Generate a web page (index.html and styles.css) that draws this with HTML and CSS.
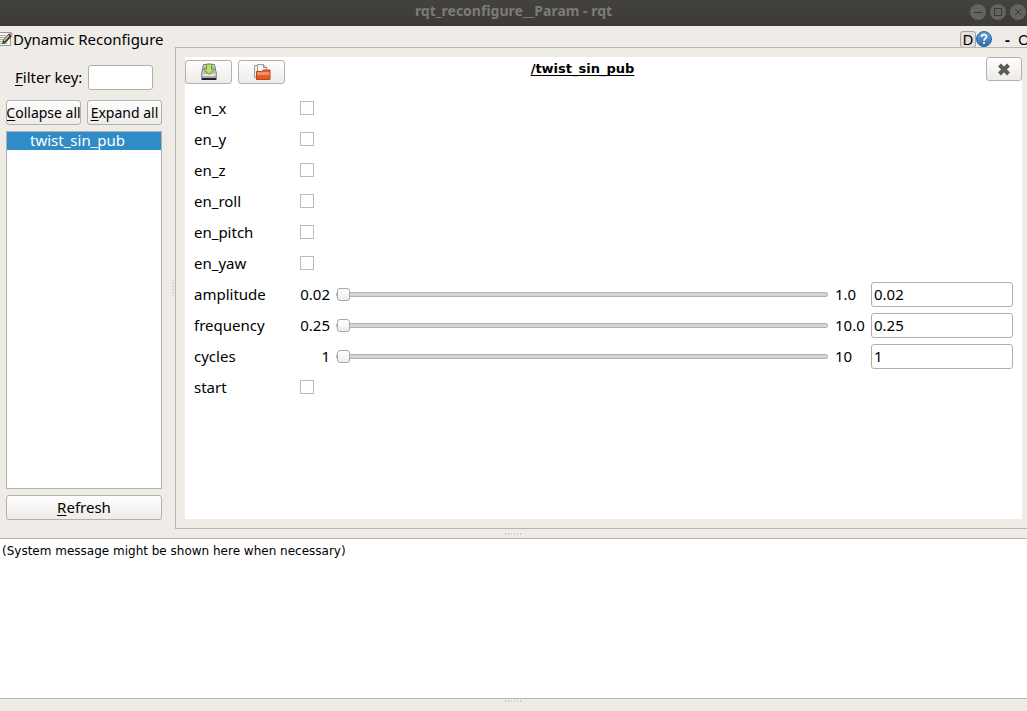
FILE: index.html
```html
<!DOCTYPE html>
<html lang="en">
<head>
<meta charset="utf-8">
<title>rqt_reconfigure__Param - rqt</title>
<link rel="stylesheet" href="styles.css">
</head>
<body>
<header class="titlebar">
  <h1 class="window-title">rqt_reconfigure__Param - rqt</h1>
  <div class="window-controls">
    <button class="window-button" aria-label="Minimize"><svg viewBox="0 0 16 16"><path d="M4 8.500h8"/></svg></button>
    <button class="window-button" aria-label="Maximize"><svg viewBox="0 0 16 16"><path d="M4.500 4.500h7v7h-7z"/></svg></button>
    <button class="window-button" aria-label="Close"><svg viewBox="0 0 16 16"><path d="M5 5l6 6M11 5l-6 6"/></svg></button>
  </div>
</header>
<div class="dock-header">
  <svg class="edit-icon" viewBox="0 0 13 16">
    <path d="M-3 1.500h13.500v13H-3z" fill="#f4f4f2" stroke="#999"/>
    <path d="M-1 4.500h7M-1 6.500h6M-1 8.500h4M-1 10.500h3M-1 12.500h8" stroke="#aaa"/>
    <path d="M2 13l1-4 6-6.500 3 2.500-6.500 7z" fill="#333"/>
    <path d="M4 10l5-5.500" stroke="#d9cf72" stroke-width="1.500"/>
    <path d="M9 2.500l2-1.500 2 2-1.500 2z" fill="#d48bb4"/>
  </svg>
  <h2 class="dock-title">Dynamic Reconfigure</h2>
  <div class="dock-tools">
    <button class="d-button">D</button>
    <button class="help-button" aria-label="Help"><svg viewBox="0 0 16 16">
      <defs><linearGradient id="help" x2="0" y2="1"><stop stop-color="#69a5d5"/><stop offset="1" stop-color="#286ca8"/></linearGradient></defs>
      <circle cx="8" cy="8" r="7.500" fill="url(#help)" stroke="#2b659b"/>
      <path d="M5.500 6c0-3.200 5-3.200 5-.3 0 1.800-2.500 1.800-2.500 4" fill="none" stroke="#fff" stroke-width="1.700"/>
      <circle cx="8" cy="12" r="1.100" fill="#fff"/></svg></button>
    <button class="text-tool minus">-</button>
    <button class="text-tool float">O</button>
  </div>
</div>
<main class="workspace">
  <aside class="sidebar">
    <div class="filter">
      <label for="filter"><u>F</u>ilter key:</label>
      <input id="filter" class="field" type="text">
    </div>
    <div class="tree-actions">
      <button class="push"><span><u>C</u>ollapse all</span></button>
      <button class="push"><span><u>E</u>xpand all</span></button>
    </div>
    <ul class="tree"><li class="selected">twist_sin_pub</li></ul>
    <button class="push"><span><u>R</u>efresh</span></button>
  </aside>
  <div class="split-v"><svg viewBox="0 0 2 16"><path d="M1 0v16" stroke="#a8a5a1" stroke-dasharray="1 2"/></svg></div>
  <section class="frame">
    <div class="panel">
      <div class="toolbar">
        <div class="tool-group">
          <button class="push tool" aria-label="Save"><svg width="18" height="18" viewBox="0 0 18 18">
            <path d="M3.500 1.500h11l2 10v5h-15v-5z" fill="#ddd" stroke="#777"/>
            <path d="M4 3h10l1.500 8h-13z" fill="#bdbdbb"/>
            <path d="M1.500 12h15v4h-15z" fill="#aaa"/>
            <path d="M2 16h14" stroke="#222" stroke-width="2"/>
            <path d="M3 12.500h12" stroke="#eee"/>
            <path d="M6.500 1h5v5h3L9 11.500 3.500 6h3z" fill="#b9de69" stroke="#62982a"/></svg></button>
          <button class="push tool" aria-label="Open"><svg width="18" height="18" viewBox="0 0 18 18">
            <path d="M1.500 2.500h6l2 2v10h-8z" fill="#eee" stroke="#999"/>
            <path d="M4.500 1.500h6l3 3v9h-9z" fill="#f7f7f7" stroke="#999"/>
            <path d="M10.500 1.500v3h3" fill="#ddd" stroke="#888"/>
            <path d="M3.500 16.500v-8h5l2-1.500h6.500v9.500z" fill="#e65c28" stroke="#b94619"/>
            <path d="M4 9h12.500v3H4z" fill="#f49163"/></svg></button>
        </div>
        <h3 class="node-name">/twist_sin_pub</h3>
        <button class="push close" aria-label="Close node"><svg width="14" height="14" viewBox="0 0 14 14"><path d="M2.500 3l9 9M11.500 3l-9 9" stroke="#5a5a58" stroke-width="4"/></svg></button>
      </div>
      <div class="params">
        <div class="row"><label for="x">en_x</label><input id="x" class="check" type="checkbox"></div>
        <div class="row"><label for="y">en_y</label><input id="y" class="check" type="checkbox"></div>
        <div class="row"><label for="z">en_z</label><input id="z" class="check" type="checkbox"></div>
        <div class="row"><label for="roll">en_roll</label><input id="roll" class="check" type="checkbox"></div>
        <div class="row"><label for="pitch">en_pitch</label><input id="pitch" class="check" type="checkbox"></div>
        <div class="row"><label for="yaw">en_yaw</label><input id="yaw" class="check" type="checkbox"></div>
        <div class="row numeric"><label for="amp">amplitude</label><span class="min">0.02</span><input class="slider" type="range" min="0.02" max="1" step="0.01" value="0.02" aria-label="amplitude slider"><span class="max">1.0</span><input id="amp" class="field" type="text" value="0.02"></div>
        <div class="row numeric"><label for="freq">frequency</label><span class="min">0.25</span><input class="slider" type="range" min="0.25" max="10" step="0.01" value="0.25" aria-label="frequency slider"><span class="max">10.0</span><input id="freq" class="field" type="text" value="0.25"></div>
        <div class="row numeric"><label for="cyc">cycles</label><span class="min">1</span><input class="slider" type="range" min="1" max="10" value="1" aria-label="cycles slider"><span class="max">10</span><input id="cyc" class="field" type="text" value="1"></div>
        <div class="row"><label for="start">start</label><input id="start" class="check" type="checkbox"></div>
      </div>
    </div>
  </section>
</main>
<div class="split-h"><svg viewBox="0 0 17 2"><path d="M0 1h17" stroke="#a8a5a1" stroke-dasharray="1 2"/></svg></div>
<section class="messages">(System message might be shown here when necessary)</section>
<footer class="bottom"><svg viewBox="0 0 17 2"><path d="M0 1h17" stroke="#a8a5a1" stroke-dasharray="1 2"/></svg></footer>
</body>
</html>
```
FILE: styles.css
```css
* { box-sizing: border-box; }
body {
  margin: 0;
  height: 100vh;
  display: flex;
  flex-direction: column;
  overflow: hidden;
  background: #efebe7;
  color: #000;
  font: 15px/20px "Noto Sans", "Open Sans", sans-serif;
}
h1, h2, h3, ul { margin: 0; padding: 0; font: inherit; }
ul { list-style: none; }
button, input { font: inherit; color: inherit; margin: 0; }
button { padding: 0; border: 0; background: none; }
svg { display: block; }
u { text-underline-offset: 2px; text-decoration-thickness: 1px; }

.titlebar {
  flex: none;
  height: 26px;
  display: grid;
  grid-template-columns: 1fr auto 1fr;
  align-items: center;
  padding-bottom: 3px;
  background: linear-gradient(#43423e, #3c3b37);
}
.window-title { grid-column: 2; padding-bottom: 2px; font-weight: bold; font-size: 14px; color: #7d7b74; }
.window-controls { display: flex; justify-content: flex-end; gap: 4px; padding-right: 1px; }
.window-button { width: 16px; height: 16px; border-radius: 50%; background: #65635d; }
.window-button path { fill: none; stroke: #3a3935; }

.dock-header { flex: none; height: 21px; display: flex; align-items: center; padding-top: 5px; }
.edit-icon { width: 13px; height: 16px; }
.dock-title { flex: 1; }
.dock-tools { display: flex; align-items: center; }
.d-button { width: 16px; height: 17px; line-height: 15px; border: 1px solid #a7a39f; border-radius: 3px; background: #e3dfdb; }
.help-button { width: 16px; height: 16px; }
.text-tool { height: 20px; text-align: left; }
.minus { width: 26px; padding-left: 13px; font-weight: bold; }
.float { width: 9px; overflow: hidden; }

.workspace { flex: 482 1 482px; min-height: 0; display: flex; }
.sidebar { flex: none; width: 162px; display: flex; flex-direction: column; gap: 6px; padding: 18px 0 9px 6px; }
.filter { display: flex; align-items: center; gap: 6px; padding: 0 9px; margin-bottom: 4px; }
.filter label { flex: 1; padding-bottom: 2px; white-space: nowrap; }
.field {
  height: 25px;
  padding: 0 2px;
  background: #fff;
  border: 1px solid #b1afac;
  border-radius: 3px;
}
.filter .field { width: 65px; }
.tree-actions { display: grid; grid-template-columns: 1fr 1fr; gap: 6px; font-size: 14px; }
.push {
  height: 25px;
  min-width: 0;
  padding-bottom: 1px;
  display: flex;
  align-items: center;
  justify-content: center;
  overflow: hidden;
  white-space: nowrap;
  border: 1px solid #b3b0ad;
  border-radius: 3px;
  background: linear-gradient(#fefefe, #eeebe9);
}
.tree-actions .push { padding-bottom: 0; }
.tree { flex: 1; border: 1px solid #b3b0ad; background: #fff; }
.selected { height: 18px; line-height: 17px; padding-left: 23px; background: #308cc6; color: #fff; }
.split-v { flex: none; width: 13px; display: flex; align-items: center; justify-content: flex-end; padding-right: 1px; }
.split-v svg { width: 2px; height: 16px; }
.frame { flex: 1; min-width: 0; display: flex; border: solid #b8b5b2; border-width: 1px 0 1px 1px; padding: 9px 5px 9px 9px; }
.panel { flex: 1; min-width: 0; background: #fff; }

.toolbar { display: grid; grid-template-columns: 1fr auto 1fr; align-items: start; }
.tool-group { display: flex; gap: 6px; padding-top: 3px; }
.tool { width: 47px; height: 24px; }
.node-name {
  margin-right: 42px;
  padding-top: 2px;
  font: bold 13px/20px "DejaVu Sans", sans-serif;
  text-decoration: underline;
  text-decoration-skip-ink: none;
  text-underline-offset: 2px;
  text-decoration-thickness: 1px;
}
.close { width: 36px; height: 24px; justify-self: end; }
.params { display: grid; gap: 1px; padding: 9px 9px 0; }
.row { display: grid; grid-template-columns: 106px 1fr; align-items: center; height: 30px; }
.numeric { grid-template-columns: 106px 30px minmax(0, 1fr) 36px 142px; }
.min { text-align: right; }
.max { white-space: nowrap; }
.check { appearance: none; width: 14px; height: 14px; border: 1px solid #bbb; background: #fff; }
.slider { appearance: none; width: auto; height: 15px; margin: 0 7px 0 6px; background: none; }
.slider::-webkit-slider-runnable-track { height: 5px; border: 1px solid #b5b3b0; border-radius: 2px; background: #d6d4d1; }
.slider::-webkit-slider-thumb { appearance: none; width: 13px; height: 13px; margin-top: -5px; border: 1px solid #aaa7a4; border-radius: 3px; background: linear-gradient(#fff, #f0eeec); }

.split-h { flex: none; height: 9px; display: flex; align-items: center; justify-content: center; }
.split-h svg, .bottom svg { width: 17px; height: 2px; }
.messages { flex: 161 1 161px; min-height: 0; border: solid #b8b5b2; border-width: 1px 0; background: #fff; padding: 2px; font: 12px/20px "DejaVu Sans", sans-serif; }
.bottom { flex: none; height: 12px; display: flex; justify-content: center; padding-top: 1px; }
```
